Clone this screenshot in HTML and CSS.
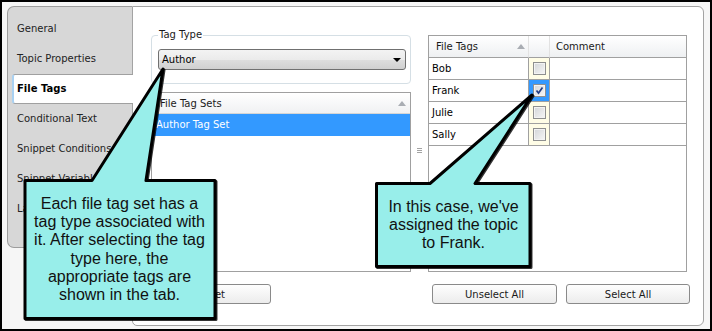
FILE: index.html
```html
<!DOCTYPE html>
<html lang="en">
<head>
    <meta charset="UTF-8">
    <meta name="viewport" content="width=device-width, initial-scale=1.0">
    <title>File Tags</title>
    <link rel="stylesheet" href="styles.css">
</head>
<body>
    <div class="screen">
        <div class="dialog">
            <ul class="tabs">
                <li>General</li>
                <li>Topic Properties</li>
                <li class="active">File Tags</li>
                <li>Conditional Text</li>
                <li>Snippet Conditions</li>
                <li>Snippet Variables</li>
                <li>Language</li>
            </ul>
            <div class="page">
                <div class="col col-left">
                    <fieldset class="group">
                        <legend>Tag Type</legend>
                        <div class="select"><span>Author</span><i class="caret"></i></div>
                    </fieldset>
                    <div class="list">
                        <div class="list-head"><span>File Tag Sets</span><i class="sort"></i></div>
                        <div class="list-row selected">Author Tag Set</div>
                    </div>
                    <div class="buttons">
                        <button class="btn-reset">Reset</button>
                    </div>
                </div>
                <div class="splitter"><span class="grip"></span></div>
                <div class="col col-right">
                    <div class="grid">
                        <table>
                            <colgroup>
                                <col class="c-name">
                                <col class="c-check">
                                <col class="c-comment">
                            </colgroup>
                            <thead>
                                <tr>
                                    <th class="th-name"><div class="th-inner"><span>File Tags</span><i class="sort"></i></div></th>
                                    <th class="th-check"></th>
                                    <th class="th-comment">Comment</th>
                                </tr>
                            </thead>
                            <tbody>
                                <tr>
                                    <td class="name">Bob</td>
                                    <td class="check"><span class="cb"></span></td>
                                    <td class="comment"></td>
                                </tr>
                                <tr>
                                    <td class="name">Frank</td>
                                    <td class="check on"><span class="cb"><svg viewBox="0 0 11 11" width="11" height="11"><path d="M2.5 5.5 L4.5 8 L8.5 2.5" fill="none" stroke="#233e85" stroke-width="1.7"/></svg></span></td>
                                    <td class="comment"></td>
                                </tr>
                                <tr>
                                    <td class="name">Julie</td>
                                    <td class="check"><span class="cb"></span></td>
                                    <td class="comment"></td>
                                </tr>
                                <tr>
                                    <td class="name">Sally</td>
                                    <td class="check"><span class="cb"></span></td>
                                    <td class="comment"></td>
                                </tr>
                            </tbody>
                        </table>
                    </div>
                    <div class="buttons">
                        <button class="btn-unselect">Unselect All</button>
                        <button class="btn-select">Select All</button>
                    </div>
                </div>
            </div>
        </div>

        <!-- callout bubbles drawn over the dialog -->
        <svg class="callouts" viewBox="0 0 712 331" width="712" height="331">
            <path class="bubble" d="M25 180.5 L92 180.5 L163 69 L146 180.5 L215 180.5 L215 318.5 L25 318.5 Z"/>
            <path class="bubble" d="M376.5 183.5 L430 183.5 L532 95 L475 183.5 L530 183.5 L530 266.5 L376.5 266.5 Z"/>
        </svg>
        <div class="note note-1">
            <p>Each file tag set has a<br>tag type associated with<br>it. After selecting the tag<br>type here, the<br>appropriate tags are<br>shown in the tab.</p>
        </div>
        <div class="note note-2">
            <p>In this case, we've<br>assigned the topic<br>to Frank.</p>
        </div>
    </div>
</body>
</html>
```

FILE: styles.css
```css
* {
    box-sizing: border-box;
}
body {
    margin: 0;
    background: #fff;
    font-family: "DejaVu Sans", Tahoma, sans-serif;
    font-size: 10px;
    color: #1a1a1a;
}
.screen {
    position: relative;
    width: 712px;
    height: 331px;
    border: 2px solid #000;
    background: #f6f6f6;
    padding: 4px 6px 0 5px;
}
.dialog {
    display: flex;
    align-items: flex-start;
}

/* left tab strip */
.tabs {
    flex: none;
    width: 125px;
    height: 242px;
    margin: 0;
    padding: 7px 0 0 4px;
    list-style: none;
    background: #d7d7d7;
    border: 1px solid #9d9d9d;
    border-right: none;
    border-radius: 7px 0 0 7px;
}
.tabs li {
    height: 30px;
    line-height: 30px;
    padding-left: 5px;
    white-space: nowrap;
    color: #222;
}
.tabs li.active {
    position: relative;
    z-index: 1;
    margin-right: -1px;
    background: #fff;
    border: 1px solid #a0a0a0;
    border-left: 2px solid #a9d1f2;
    border-right: none;
    border-radius: 3px 0 0 3px;
    padding-left: 3px;
    line-height: 28px;
    font-weight: bold;
    color: #000;
}

/* tab page */
.page {
    flex: 1;
    min-width: 0;
    height: 320px;
    display: flex;
    padding: 28px 16px 21px 18px;
    background: #fff;
    border: 1px solid #a3a3a3;
    border-radius: 0 6px 6px 5px;
}
.col {
    display: flex;
    flex-direction: column;
}
.col-left {
    flex: none;
    width: 260px;
}
.col-right {
    flex: 1;
    min-width: 0;
}
.splitter {
    flex: none;
    width: 17px;
    display: flex;
    justify-content: center;
}
.grip {
    margin-top: 113px;
    width: 5px;
    height: 5px;
    border-top: 1px solid #a3a3a3;
    border-bottom: 1px solid #a3a3a3;
    background: linear-gradient(#a3a3a3, #a3a3a3) center / 100% 1px no-repeat;
}

/* tag type group */
.group {
    margin: -6px 0 0;
    padding: 8px 4px 13px 6px;
    border: 1px solid #d5dfe5;
    border-radius: 4px;
}
.group legend {
    padding: 0 1px;
    line-height: 12px;
    color: #1a1a1a;
}
.select {
    height: 21px;
    display: flex;
    align-items: center;
    justify-content: space-between;
    padding: 0 4px 0 3px;
    border: 1px solid #707070;
    border-radius: 3px;
    background: linear-gradient(#f3f3f3 0%, #ebebeb 50%, #dedede 51%, #d0d0d0 100%);
    color: #000;
}
.caret {
    width: 0;
    height: 0;
    border-left: 4px solid transparent;
    border-right: 4px solid transparent;
    border-top: 4px solid #000;
}
.sort {
    width: 0;
    height: 0;
    border-left: 4px solid transparent;
    border-right: 4px solid transparent;
    border-bottom: 5px solid #a9adb3;
}

/* file tag sets list */
.list {
    flex: 1;
    margin-top: 8px;
    border: 1px solid #a0a0a0;
    background: #fff;
}
.list-head {
    height: 21px;
    display: flex;
    align-items: center;
    justify-content: space-between;
    padding: 0 4px 0 8px;
    border-bottom: 1px solid #d5d5d5;
    background: linear-gradient(#fff, #f0f1f3);
}
.list-row {
    height: 22px;
    line-height: 22px;
    padding-left: 4px;
}
.list-row.selected {
    background: #3399ff;
    color: #fff;
}

/* file tags grid */
.grid {
    flex: 1;
    border: 1px solid #a0a0a0;
    background: #fff;
}
.grid table {
    width: 257px;
    table-layout: fixed;
    border-collapse: separate;
    border-spacing: 0;
}
.c-name { width: 100px; }
.c-check { width: 21px; }
.c-comment { width: 136px; }
.grid th {
    height: 22px;
    padding: 0;
    text-align: left;
    font-weight: normal;
    color: #1a1a1a;
    border-bottom: 1px solid #a0a0a0;
    border-right: 1px solid #e2e2e2;
    background: linear-gradient(#fff, #eef0f2);
}
.grid th.th-comment {
    border-right: none;
    padding-left: 6px;
}
.th-inner {
    display: flex;
    align-items: center;
    justify-content: space-between;
    padding: 0 3px 0 7px;
}
.grid td {
    height: 22px;
    padding: 0;
    border-bottom: 1px solid #a0a0a0;
    border-right: 1px solid #a0a0a0;
}
.grid td.name {
    padding-left: 3px;
    color: #000;
}
.grid td.check {
    background: #fffde6;
}
.grid td.check.on {
    background: #3399ff;
}
.grid td.comment {
    border-right: none;
}
.cb {
    display: block;
    width: 13px;
    height: 13px;
    margin: 0 auto;
    border: 1px solid #8e8f8f;
    background: linear-gradient(135deg, #d3d5d8, #f6f6f6);
    box-shadow: inset 0 0 0 1px #f3f3f3;
}
.cb svg {
    display: block;
}

/* buttons */
.buttons {
    display: flex;
    gap: 9px;
    height: 20px;
    margin-top: 12px;
}
.col-right .buttons {
    padding-left: 4px;
}
button {
    flex: none;
    height: 20px;
    padding: 0;
    font: inherit;
    color: #1a1a1a;
    border: 1px solid #8a8a8a;
    border-radius: 3px;
    background: linear-gradient(#fefefe, #ececec);
}
.btn-reset { width: 120px; }
.btn-unselect { width: 125px; }
.btn-select { width: 124px; }

/* callouts */
.callouts {
    position: absolute;
    top: -2px;
    left: -2px;
    pointer-events: none;
}
.bubble {
    fill: #98eeea;
    stroke: #000;
    stroke-width: 3;
    stroke-linejoin: round;
    filter: drop-shadow(1px 1px 0 rgba(0,0,0,0.8));
}
.note {
    position: absolute;
    display: flex;
    align-items: center;
    justify-content: center;
    text-align: center;
    font-family: "Liberation Sans", Arial, sans-serif;
    font-size: 16px;
    line-height: 18.3px;
    color: #111;
}
.note p {
    margin: 0;
}
.note-1 {
    left: 21px;
    top: 177px;
    width: 193px;
    height: 141px;
}
.note-2 {
    left: 373px;
    top: 180px;
    width: 157px;
    height: 86px;
}
```
